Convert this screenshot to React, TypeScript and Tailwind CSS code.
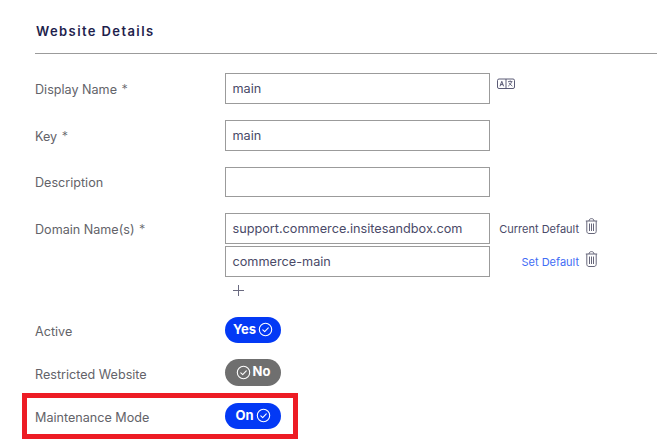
import React from 'react';

const labelCls = 'w-[190px] shrink-0 text-[12.6px] text-[#636369]';
const inputCls = 'w-[265px] border border-[#9b9b9b] bg-white px-[6.5px] text-[12.7px] text-[#4a4a68] flex items-center';

const Check: React.FC = () => (
  <svg width="15" height="15" viewBox="0 0 15 15" fill="none" stroke="white" strokeWidth="1.1" className="-mt-[1px]">
    <circle cx="7.5" cy="7.5" r="6.2" />
    <path d="M4.8 7.8l1.9 1.8 3.6-3.7" strokeLinecap="round" strokeLinejoin="round" />
  </svg>
);

const Trash: React.FC = () => (
  <svg width="13" height="16" viewBox="0 0 13 16" fill="none" stroke="#66667a" strokeWidth="1">
    <path d="M0.8 3h11.4M4 3c0-1.4 1-2.4 2.5-2.4S9 1.6 9 3" />
    <path d="M1.8 3v10.3c0 1.3 .9 2.2 2.2 2.2h5c1.3 0 2.2-.9 2.2-2.2V3" />
    <path d="M4.5 5.5v7.5M6.5 5.5v7.5M8.5 5.5v7.5" />
  </svg>
);

const Translate: React.FC = () => (
  <svg width="18" height="12" viewBox="0 0 18 12" fill="none" stroke="#4a4a68" strokeWidth="0.9">
    <rect x="0.5" y="1" width="17" height="9.5" rx="1.5" />
    <path d="M9 1v9.5" />
    <path d="M3 8.3l1.8-5 1.8 5M3.7 6.6h2.2" />
    <path d="M13.2 2.4v1M11 3.6h4.4M14.6 3.6c-.5 2-1.7 3.4-3.4 4.6M11.8 5l3.6 3.2" strokeWidth="0.8" />
  </svg>
);

const Toggle: React.FC<{ text: string; on?: boolean }> = ({ text, on = true }) => (
  <div className={`w-14 rounded-full flex items-center justify-center gap-[2px] text-[13px] font-bold text-white ${on ? 'h-[26px] bg-[#0339f5]' : 'h-[27px] bg-[#6f6f6f]'}`}>
    {on ? <span className="-mt-[1px]">{text}</span> : <Check />}
    {on ? <Check /> : <span className="-mt-[1px]">{text}</span>}
  </div>
);

const Req: React.FC = () => <span className="ml-[1px] font-light text-[#636369]">*</span>;

export default function App() {
  return (
    <div className="w-[657px] h-[442px] overflow-hidden bg-white pl-[22px] pt-[24px]" style={{ fontFamily: 'Inter, "Noto Sans", sans-serif' }}>
      <div className="ml-[13px] h-[30px] border-b border-[#9b9b9b]">
        <h2 className="pl-[1px] text-[13px] leading-[15px] font-semibold tracking-[1.4px] text-[#1f1f4d]">Website Details</h2>
      </div>

      <div className="mt-[19px] ml-[13px] flex items-center">
        <div className={`${labelCls} pt-[3px]`}>Display Name <Req /></div>
        <div className={`${inputCls} h-[31px]`}>main</div>
        <div className="ml-[7px] -mt-[10px]"><Translate /></div>
      </div>
      <div className="mt-[16px] ml-[13px] flex items-center">
        <div className={`${labelCls} pt-[3px]`}>Key <Req /></div>
        <div className={`${inputCls} h-[31px]`}>main</div>
      </div>
      <div className="mt-[16px] ml-[13px] flex items-center">
        <div className={`${labelCls} pt-[2px]`}>Description</div>
        <div className={`${inputCls} h-[30px]`} />
      </div>

      <div className="mt-[16px] ml-[13px] flex items-center">
        <div className={`${labelCls} pt-[3px]`}>Domain Name(s) <Req /></div>
        <div className={`${inputCls} h-[31px]`}>support.commerce.insitesandbox.com</div>
        <div className="w-[89px] shrink-0 text-right text-[11px] text-[#4a4a68] mt-[1px]">Current Default</div>
        <div className="ml-[6px] -mt-[6px]"><Trash /></div>
      </div>
      <div className="mt-[2px] ml-[13px] flex items-center">
        <div className="w-[190px] shrink-0" />
        <div className={`${inputCls} h-[31px]`}>commerce-main</div>
        <div className="w-[89px] shrink-0 text-right text-[11px] text-[#3f6df5] mt-[1px]">Set Default</div>
        <div className="ml-[6px] -mt-[6px]"><Trash /></div>
      </div>
      <div className="ml-[13px] pl-[197px] mt-[5px] h-[16px] flex items-center">
        <svg width="13" height="13" viewBox="0 0 13 13" stroke="#6a6a80" strokeWidth="1"><path d="M6.5 1v11M1 6.5h11" /></svg>
      </div>

      <div className="mt-[19px] ml-[13px] flex items-center">
        <div className={`${labelCls} pt-[4px]`}>Active</div>
        <Toggle text="Yes" />
      </div>
      <div className="mt-[16px] ml-[13px] flex items-center">
        <div className={`${labelCls} pt-[5px]`}>Restricted Website</div>
        <Toggle text="No" on={false} />
      </div>
      <div className="mt-[7px] w-[276px] h-[46px] border-[5px] border-[#ed1c24] pl-[8px] flex items-center">
        <div className={`${labelCls} pt-[4px]`}>Maintenance Mode</div>
        <Toggle text="On" />
      </div>
    </div>
  );
}
